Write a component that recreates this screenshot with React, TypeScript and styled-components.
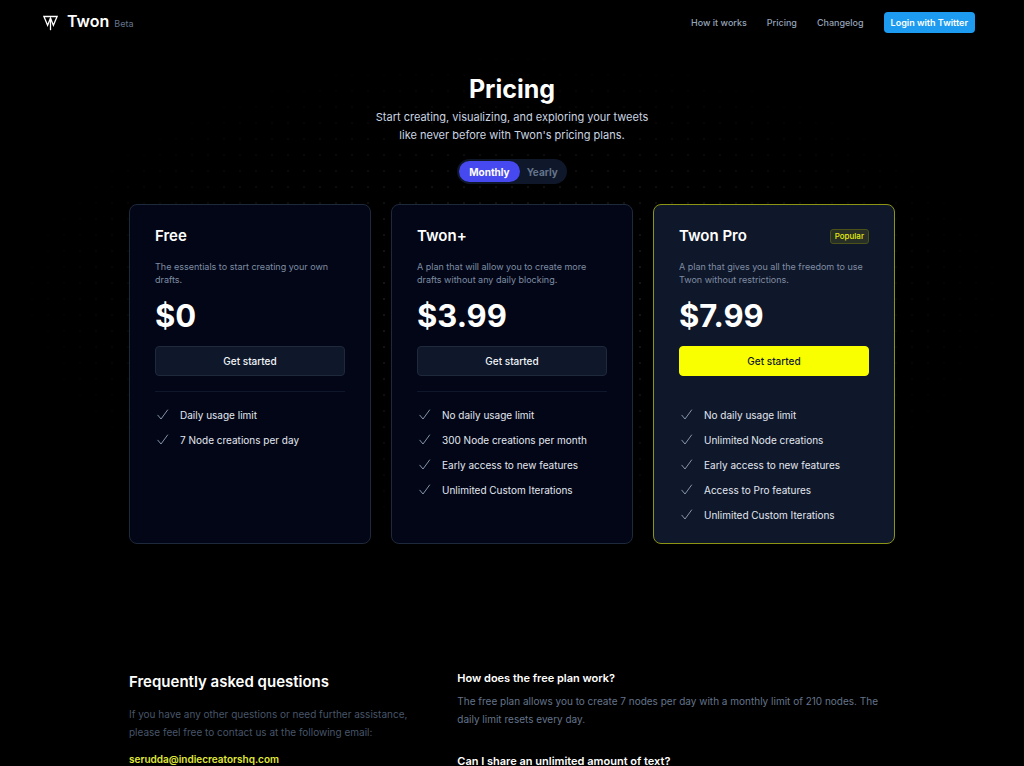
import React, { useState } from "react";
import styled, { createGlobalStyle } from "styled-components";

const GlobalStyle = createGlobalStyle`
  *, *::before, *::after { box-sizing: border-box; }
  html { scrollbar-width: none; }
  body {
    margin: 0;
    background: #000;
    color: #fff;
    font-family: Inter, "Liberation Sans", sans-serif;
    font-size: 11px;
    -webkit-font-smoothing: antialiased;
  }
  h1, h2, h3, p, ul { margin: 0; padding: 0; }
  button { font-family: inherit; cursor: pointer; }
  a { text-decoration: none; }
`;

const Page = styled.div`
  min-height: 100vh;
`;

const Header = styled.header`
  display: flex;
  align-items: flex-start;
  justify-content: space-between;
  padding: 12px 49px 12px 43px;
`;

const Brand = styled.a`
  display: flex;
  align-items: center;
  gap: 9px;
  color: #fff;
`;

const BrandText = styled.span`
  display: flex;
  align-items: baseline;
  gap: 5px;
  line-height: 18px;
`;

const BrandName = styled.span`
  font-size: 16px;
  font-weight: 600;
`;

const BrandTag = styled.span`
  font-size: 9px;
  color: #64748b;
`;

const Nav = styled.nav`
  display: flex;
  align-items: center;
  gap: 20px;
`;

const NavLink = styled.a`
  font-size: 9px;
  font-weight: 500;
  color: #94a3b8;
`;

const LoginButton = styled.button`
  height: 21px;
  padding: 0 7px;
  border: 0;
  border-radius: 4px;
  background: #1d9bf0;
  color: #fff;
  font-size: 9px;
  font-weight: 600;
`;

const Hero = styled.main`
  position: relative;
`;

const Dots = styled.div`
  position: absolute;
  inset: 0;
  background-image: radial-gradient(#191919 1px, transparent 1px);
  background-size: 16px 16px;
  background-position: center 6px;
  mask-image: radial-gradient(ellipse 50% 50% at 50% 50%, #000 10%, transparent 100%);
`;

const Container = styled.div`
  position: relative;
  max-width: 766px;
  margin: 0 auto;
`;

const Intro = styled.div`
  display: flex;
  flex-direction: column;
  align-items: center;
  padding-top: 27px;
  text-align: center;
`;

const Title = styled.h1`
  margin-bottom: 2px;
  font-size: 25px;
  line-height: 34px;
  font-weight: 700;
`;

const Lead = styled.p`
  max-width: 290px;
  font-size: 11px;
  line-height: 18px;
  color: #cbd5e1;
`;

const Toggle = styled.div`
  display: flex;
  margin: 15px 0 20px;
  padding: 2px;
  border-radius: 13px;
  background: #0f172a;
`;

const ToggleOption = styled.button<{ $active: boolean }>`
  height: 21px;
  padding: 0 ${(p) => (p.$active ? "10px" : "7px")};
  border: 0;
  border-radius: 11px;
  background: ${(p) => (p.$active ? "#4648f0" : "transparent")};
  color: ${(p) => (p.$active ? "#fff" : "#64748b")};
  font-size: 10px;
  font-weight: 700;
`;

const Plans = styled.div`
  display: grid;
  grid-template-columns: repeat(3, 1fr);
  gap: 20px;
`;

const Card = styled.section<{ $featured?: boolean }>`
  min-height: 340px;
  padding: 21px 25px 15px;
  border: 1px solid ${(p) => (p.$featured ? "#8c9414" : "#1e293b")};
  border-radius: 8px;
  background: ${(p) => (p.$featured ? "#0f172a" : "#020617")};
`;

const CardHead = styled.div`
  display: flex;
  align-items: center;
  justify-content: space-between;
`;

const PlanName = styled.h2`
  font-size: 15px;
  line-height: 20px;
  font-weight: 600;
`;

const Badge = styled.span`
  padding: 0 4px;
  border: 1px solid #4a5218;
  border-radius: 3px;
  background: #272f27;
  color: #e6ee0a;
  font-size: 8px;
  line-height: 13px;
  font-weight: 500;
`;

const Description = styled.p`
  margin-top: 14px;
  font-size: 9px;
  line-height: 13px;
  color: #7f8da3;
`;

const Price = styled.p`
  margin: 12px 0 13px;
  font-size: 31px;
  line-height: 35px;
  font-weight: 700;
`;

const PlanButton = styled.button<{ $featured?: boolean }>`
  display: block;
  width: 100%;
  height: 30px;
  border: 1px solid ${(p) => (p.$featured ? "#faff00" : "#1e293b")};
  border-radius: 4px;
  background: ${(p) => (p.$featured ? "#faff00" : "#0f172a")};
  color: ${(p) => (p.$featured ? "#0f172a" : "#f1f5f9")};
  font-size: 10px;
  font-weight: 500;
`;

const Divider = styled.hr`
  margin: 15px 0 10px;
  border: 0;
  border-top: 1px solid #0f172a;
`;

const Features = styled.ul`
  list-style: none;
`;

const Feature = styled.li`
  display: flex;
  align-items: center;
  gap: 10px;
  height: 25px;
  font-size: 10px;
  color: #e2e8f0;
`;

const Faq = styled.section`
  display: grid;
  grid-template-columns: 3fr 4fr;
  padding: 125px 0 0;
`;

const FaqTitle = styled.h2`
  font-size: 15px;
  line-height: 26px;
  font-weight: 600;
`;

const Contact = styled.p`
  max-width: 290px;
  margin: 10px 0 9px;
  font-size: 10px;
  line-height: 18px;
  color: #475569;
`;

const Email = styled.a`
  font-size: 10px;
  line-height: 18px;
  font-weight: 600;
  color: #e0ea3a;
`;

const Question = styled.h3`
  font-size: 11px;
  line-height: 18px;
  font-weight: 600;
`;

const Answer = styled.p`
  margin: 5px 0 24px;
  font-size: 10px;
  line-height: 18px;
  color: #64748b;
`;

function Logo() {
  return (
    <svg width="15" height="16" viewBox="0 0 15 16" fill="none" stroke="#fff" strokeWidth="1.3" aria-hidden="true">
      <path d="M.9 1.5H14.1L10.4 10.2 7.5 3.2 4.6 10.2Z" />
      <path d="M7.5 3V15.2" />
    </svg>
  );
}

function Check() {
  return (
    <svg width="15" height="15" viewBox="0 0 15 15" fill="none" stroke="#94a3b8" strokeWidth="0.9" strokeLinecap="round" strokeLinejoin="round" aria-hidden="true">
      <path d="M2.8 8.2 6 12 12.6 3" />
    </svg>
  );
}

interface Plan {
  name: string;
  description: string;
  price: string;
  features: string[];
  featured?: boolean;
}

const plans: Plan[] = [
  {
    name: "Free",
    description: "The essentials to start creating your own drafts.",
    price: "$0",
    features: ["Daily usage limit", "7 Node creations per day"],
  },
  {
    name: "Twon+",
    description: "A plan that will allow you to create more drafts without any daily blocking.",
    price: "$3.99",
    features: [
      "No daily usage limit",
      "300 Node creations per month",
      "Early access to new features",
      "Unlimited Custom Iterations",
    ],
  },
  {
    name: "Twon Pro",
    description: "A plan that gives you all the freedom to use Twon without restrictions.",
    price: "$7.99",
    featured: true,
    features: [
      "No daily usage limit",
      "Unlimited Node creations",
      "Early access to new features",
      "Access to Pro features",
      "Unlimited Custom Iterations",
    ],
  },
];

const periods = ["Monthly", "Yearly"];

export default function App() {
  const [period, setPeriod] = useState("Monthly");
  return (
    <Page>
      <GlobalStyle />
      <Header>
        <Brand href="#">
          <Logo />
          <BrandText>
            <BrandName>Twon</BrandName>
            <BrandTag>Beta</BrandTag>
          </BrandText>
        </Brand>
        <Nav>
          <NavLink href="#how">How it works</NavLink>
          <NavLink href="#pricing">Pricing</NavLink>
          <NavLink href="#changelog">Changelog</NavLink>
          <LoginButton>Login with Twitter</LoginButton>
        </Nav>
      </Header>
      <Hero>
        <Dots />
        <Container>
          <Intro>
            <Title>Pricing</Title>
            <Lead>
              Start creating, visualizing, and exploring your tweets like never before with Twon's pricing plans.
            </Lead>
            <Toggle>
              {periods.map((p) => (
                <ToggleOption key={p} $active={p === period} aria-pressed={p === period} onClick={() => setPeriod(p)}>
                  {p}
                </ToggleOption>
              ))}
            </Toggle>
          </Intro>
          <Plans>
            {plans.map((plan) => (
              <Card key={plan.name} $featured={plan.featured}>
                <CardHead>
                  <PlanName>{plan.name}</PlanName>
                  {plan.featured && <Badge>Popular</Badge>}
                </CardHead>
                <Description>{plan.description}</Description>
                <Price>{plan.price}</Price>
                <PlanButton $featured={plan.featured}>Get started</PlanButton>
                <Divider />
                <Features>
                  {plan.features.map((f) => (
                    <Feature key={f}>
                      <Check />
                      {f}
                    </Feature>
                  ))}
                </Features>
              </Card>
            ))}
          </Plans>
        </Container>
      </Hero>
      <Container>
        <Faq>
          <div>
            <FaqTitle>Frequently asked questions</FaqTitle>
            <Contact>
              If you have any other questions or need further assistance, please feel free to contact us at the
              following email:
            </Contact>
            <Email href="mailto:serudda@indiecreatorshq.com">serudda@indiecreatorshq.com</Email>
          </div>
          <div>
            <Question>How does the free plan work?</Question>
            <Answer>
              The free plan allows you to create 7 nodes per day with a monthly limit of 210 nodes. The daily limit
              resets every day.
            </Answer>
            <Question>Can I share an unlimited amount of text?</Question>
          </div>
        </Faq>
      </Container>
    </Page>
  );
}
